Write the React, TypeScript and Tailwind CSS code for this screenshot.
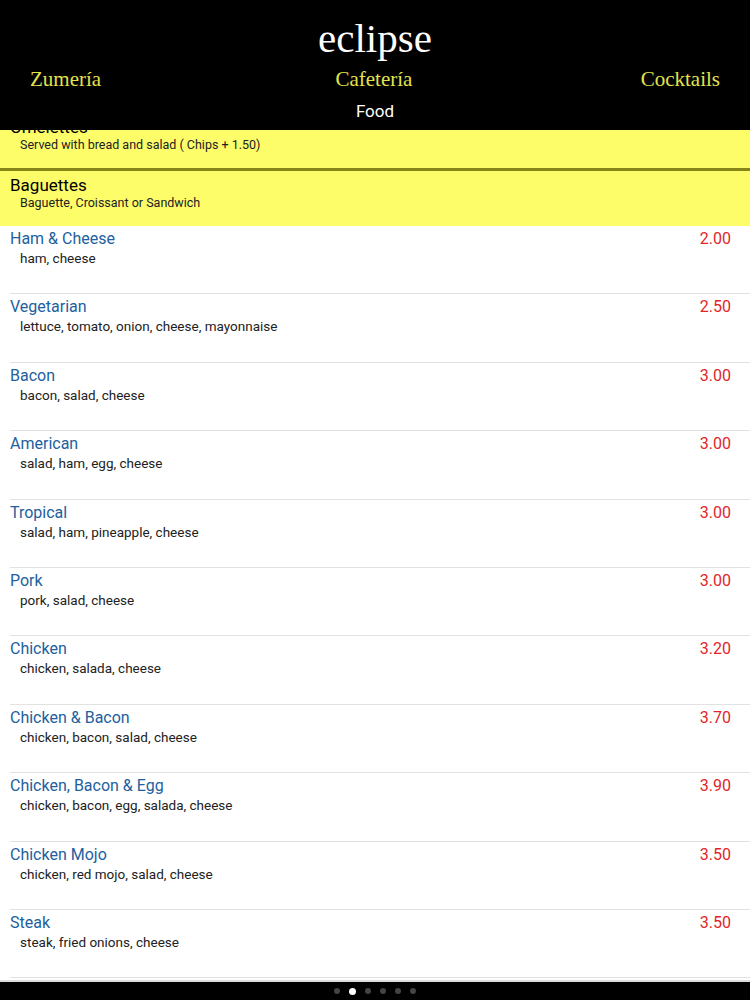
import React from 'react';

interface Item {
  name: string;
  desc: string;
  price: string;
}

const items: Item[] = [
  { name: 'Ham & Cheese', desc: 'ham, cheese', price: '2.00' },
  { name: 'Vegetarian', desc: 'lettuce, tomato, onion, cheese, mayonnaise', price: '2.50' },
  { name: 'Bacon', desc: 'bacon, salad, cheese', price: '3.00' },
  { name: 'American', desc: 'salad, ham, egg, cheese', price: '3.00' },
  { name: 'Tropical', desc: 'salad, ham, pineapple, cheese', price: '3.00' },
  { name: 'Pork', desc: 'pork, salad, cheese', price: '3.00' },
  { name: 'Chicken', desc: 'chicken, salada, cheese', price: '3.20' },
  { name: 'Chicken & Bacon', desc: 'chicken, bacon, salad, cheese', price: '3.70' },
  { name: 'Chicken, Bacon & Egg', desc: 'chicken, bacon, egg, salada, cheese', price: '3.90' },
  { name: 'Chicken Mojo', desc: 'chicken, red mojo, salad, cheese', price: '3.50' },
  { name: 'Steak', desc: 'steak, fried onions, cheese', price: '3.50' },
];

// yellow category header
function Section({ title, desc }: { title: string; desc: string }) {
  return (
    <div className="h-[55px] bg-[#fdfd6a] pl-[10px] pt-[3px]">
      <div className="text-[17px] leading-[22px] text-black">{title}</div>
      <div className="pl-[10px] text-[12.5px] leading-[14px] text-[#222]">{desc}</div>
    </div>
  );
}

function Row({ item }: { item: Item }) {
  return (
    <div className="relative h-[68.4px] bg-white">
      <div className="flex justify-between pl-[10px] pr-[19px] pt-[3px]">
        <span className="text-[16px] leading-[20px] text-[#22609e]">{item.name}</span>
        <span className="text-[16px] leading-[20px] text-[#e0262b]">{item.price}</span>
      </div>
      <div className="pl-[20px] pt-[1px] text-[13.5px] leading-[17px] text-[#222]">{item.desc}</div>
      <div className="absolute bottom-0 left-[10px] right-0 h-px bg-[#e2e2e2]" />
    </div>
  );
}

export default function App() {
  return (
    <div className="flex h-[1000px] w-[750px] flex-col overflow-hidden bg-white font-['Roboto','Liberation_Sans',sans-serif]">
      {/* header */}
      <header className="relative z-10 h-[130px] shrink-0 bg-black">
        <div className="pt-[14px] text-center font-['Liberation_Serif',serif] text-[41px] leading-[48px] text-white">
          eclipse
        </div>
        <nav className="flex justify-between px-[30px] pt-[4px] font-['Liberation_Serif',serif] text-[21px] leading-[26px] text-[#e3e34a]">
          <span>Zumería</span>
          <span className="pl-[6px]">Cafetería</span>
          <span>Cocktails</span>
        </nav>
        <div className="pt-[9px] text-center text-[17px] leading-[20px] text-white">Food</div>
      </header>

      {/* scrolled list */}
      <main className="flex-1 overflow-hidden">
        <div className="-mt-[17px]">
          <Section title="Omelettes" desc="Served with bread and salad ( Chips + 1.50)" />
          <div className="h-[3px] bg-[#85851a]" />
          <Section title="Baguettes" desc="Baguette, Croissant or Sandwich" />
          {items.map((it) => (
            <Row key={it.name} item={it} />
          ))}
        </div>
      </main>

      {/* page dots */}
      <footer className="flex h-[20px] shrink-0 items-center justify-center gap-[9px] border-t-2 border-[#dcdcdc] bg-black">
        <span className="h-[6px] w-[6px] rounded-full bg-[#444]" />
        <span className="h-[7px] w-[7px] rounded-full bg-white" />
        <span className="h-[6px] w-[6px] rounded-full bg-[#444]" />
        <span className="h-[6px] w-[6px] rounded-full bg-[#444]" />
        <span className="h-[6px] w-[6px] rounded-full bg-[#444]" />
        <span className="h-[6px] w-[6px] rounded-full bg-[#444]" />
      </footer>
    </div>
  );
}
